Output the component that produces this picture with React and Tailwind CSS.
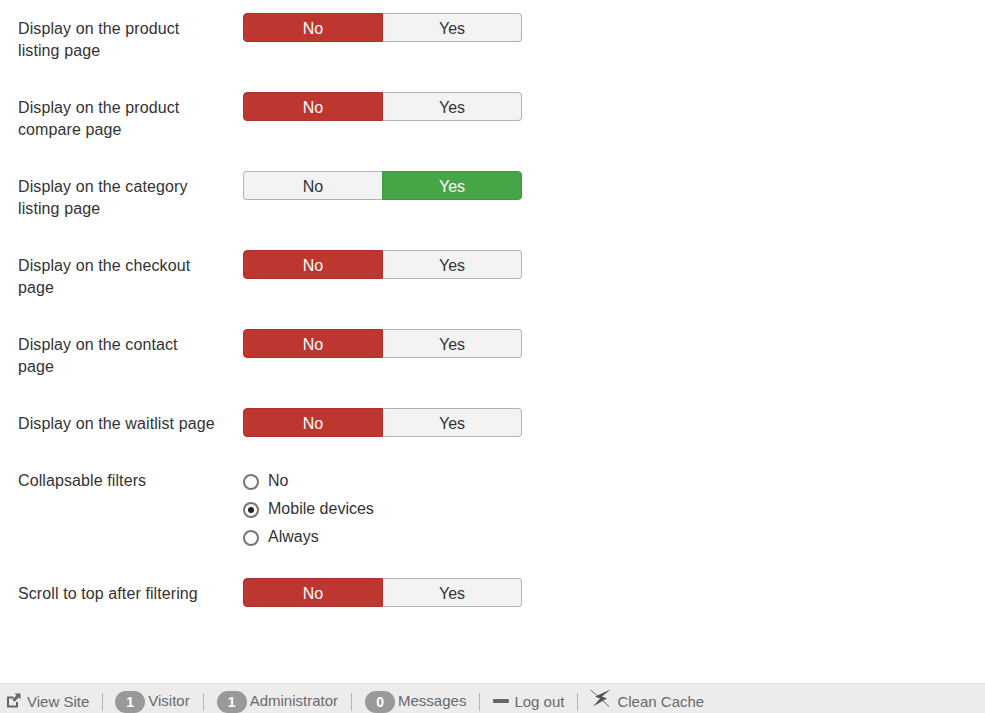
const settings = [
  { label: "Display on the product listing page", value: "no", rowClass: "h-[79px]" },
  { label: "Display on the product compare page", value: "no", rowClass: "h-[79px]" },
  { label: "Display on the category listing page", value: "yes", rowClass: "h-[79px]" },
  { label: "Display on the checkout page", value: "no", rowClass: "h-[79px]" },
  { label: "Display on the contact page", value: "no", rowClass: "h-[79px]" },
  { label: "Display on the waitlist page", value: "no", rowClass: "h-[57px]" },
];

function Toggle({ value }) {
  return (
    <div className="flex h-[29px] w-[279px] text-[16px] text-center">
      {value === "no" ? (
        <>
          <div className="w-[140px] rounded-l-[4px] bg-[#bd362f] border border-[#ad312b] leading-[29px] text-white font-medium">No</div>
          <div className="w-[139px] rounded-r-[4px] bg-[#f3f3f3] border border-l-0 border-[#b3b3b3] leading-[29px] text-[#333]">Yes</div>
        </>
      ) : (
        <>
          <div className="w-[139px] rounded-l-[4px] bg-[#f3f3f3] border border-r-0 border-[#b3b3b3] leading-[29px] text-[#333]">No</div>
          <div className="w-[140px] rounded-r-[4px] bg-[#46a546] border border-[#3f953f] leading-[29px] text-white font-medium">Yes</div>
        </>
      )}
    </div>
  );
}

function Radio({ label, checked }) {
  return (
    <div className="flex items-start h-[28px] gap-[9px]">
      <span className="flex items-center justify-center w-4 h-4 mt-[4px] rounded-full border-2 border-[#757575] bg-white">
        {checked && <span className="w-[6px] h-[6px] rounded-full bg-[#222]" />}
      </span>
      <span>{label}</span>
    </div>
  );
}

function Badge({ n, className = "" }) {
  return (
    <span className={"inline-flex items-center justify-center w-[30px] h-[22px] mt-[7px] rounded-full bg-[#999] text-white text-[14px] font-bold " + className}>{n}</span>
  );
}

function Sep() {
  return <span className="w-px h-[18px] mt-[7px] bg-[#b5b5b5] mx-[13px]" />;
}

export default function App() {
  return (
    <div className="relative h-[713px] w-[985px] bg-white text-[#333] text-[16px] leading-[22px] font-['Liberation_Sans',Arial,sans-serif] overflow-hidden flex flex-col">
      <div className="flex-1 pt-[13px] pl-[18px]">
        {settings.map((s) => (
          <div key={s.label} className={"flex " + s.rowClass}>
            <div className="w-[225px] pr-[25px] pt-[5px] tracking-[0.1px]">{s.label}</div>
            <Toggle value={s.value} />
          </div>
        ))}

        <div className="flex h-[113px]">
          <div className="w-[225px] pt-[5px] tracking-[0.1px]">Collapsable filters</div>
          <div className="pt-[5px]">
            <Radio label="No" />
            <Radio label="Mobile devices" checked />
            <Radio label="Always" />
          </div>
        </div>

        <div className="flex">
          <div className="w-[225px] pt-[5px] tracking-[0.1px]">Scroll to top after filtering</div>
          <Toggle value="no" />
        </div>
      </div>

      {/* status bar */}
      <div className="h-[30px] bg-[#ececec] border-t border-[#e0e0e0] flex items-center pl-[6px] text-[15px] text-[#6a6a6a]">
        <svg viewBox="0 0 15 15" className="w-[15px] h-[15px] mr-[6px] mt-[4px]">
          <path d="M1 3.5 H7.5 V5.5 H3 V12.5 H10 V9 H12 V14.5 H1 Z" fill="#666" />
          <path d="M8.5 0.5 H14.5 V6.5 L12.6 4.6 L8.6 8.8 L6.4 6.6 L10.5 2.5 Z" fill="#666" />
        </svg>
        <span className="pt-[6px]">View Site</span>
        <Sep />
        <Badge n="1" className="-ml-px" />
        <span className="ml-[3px] pt-[4px]">Visitor</span>
        <Sep />
        <Badge n="1" />
        <span className="ml-[3px] pt-[4px]">Administrator</span>
        <Sep />
        <Badge n="0" />
        <span className="ml-[3px] pt-[4px]">Messages</span>
        <Sep />
        <span className="w-[16px] h-[4px] mt-[5px] rounded-[1px] bg-[#666] mr-[5px]" />
        <span className="pt-[6px]">Log out</span>
        <Sep />
        <svg viewBox="0 0 21 18" className="w-[21px] h-[18px] -ml-px mr-[6px] -mt-[1px]">
          <path d="M0.5 1 L7 6.5" stroke="#666" strokeWidth="1" fill="none" />
          <path d="M20.5 0.5 L5 7.5 L10 9.5 L3 17.5 L17 9.5 L12 7.5 Z" fill="#555" />
          <path d="M13 12 L19 17.5" stroke="#666" strokeWidth="1" fill="none" />
        </svg>
        <span className="pt-[6px]">Clean Cache</span>
      </div>
    </div>
  );
}
